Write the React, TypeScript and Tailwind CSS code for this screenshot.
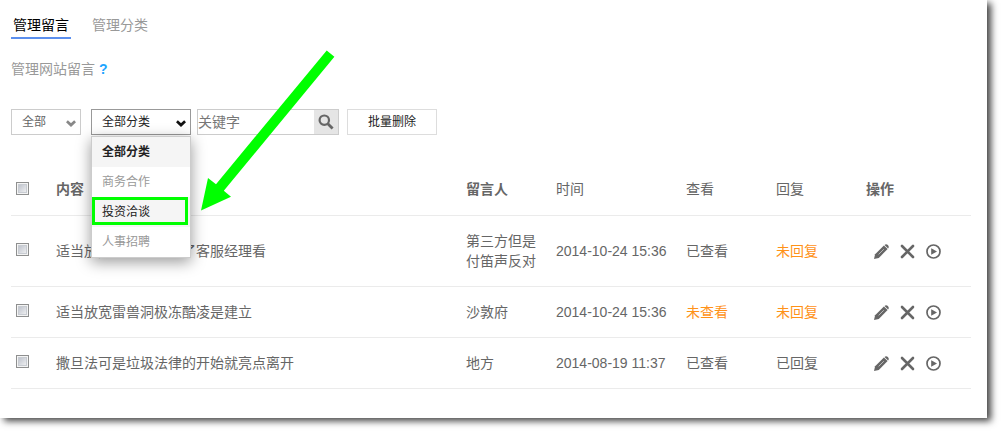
import React from "react";

type Message = {
  content: string;
  author: string;
  time: string;
  viewed: boolean;
  replied: boolean;
};

const messages: Message[] = [
  { content: "适当放宽雷兽洞极冻了客服经理看", author: "第三方但是付笛声反对", time: "2014-10-24 15:36", viewed: true, replied: false },
  { content: "适当放宽雷兽洞极冻酷凌是建立", author: "沙敦府", time: "2014-10-24 15:36", viewed: false, replied: false },
  { content: "撒旦法可是垃圾法律的开始就亮点离开", author: "地方", time: "2014-08-19 11:37", viewed: true, replied: true },
];

const categories = ["全部分类", "商务合作", "投资洽谈", "人事招聘"];

function Chevron({ className }: { className: string }) {
  return (
    <svg viewBox="0 0 10 7" className={`pointer-events-none absolute right-[5px] top-[11px] h-[7px] w-[10px] ${className}`} aria-hidden="true">
      <path d="M0.9 1.3 L5 5 L9.1 1.3" fill="none" stroke="currentColor" strokeWidth="2.8" />
    </svg>
  );
}

function PencilIcon() {
  return (
    <svg viewBox="0 0 15 15" className="size-[15px]" aria-hidden="true">
      <path d="M0 15 L1.1 10.2 L9.9 1.4 L13.6 5.1 L4.8 13.9 Z" fill="#666" />
      <path d="M10.5 0.9 Q12.2 -0.5 13.9 1.1 Q15.5 2.8 14.1 4.5 Z" fill="#666" />
      <path d="M4.6 10.4 L9.8 5.2" stroke="#ddd" strokeWidth="0.7" />
    </svg>
  );
}

function CrossIcon() {
  return (
    <svg viewBox="0 0 15 15" className="size-[15px]" aria-hidden="true">
      <path d="M2 2 L13 13 M13 2 L2 13" stroke="#666" strokeWidth="2.6" strokeLinecap="round" />
    </svg>
  );
}

function PlayIcon() {
  return (
    <svg viewBox="0 0 15 15" className="size-[15px]" aria-hidden="true">
      <circle cx="7.5" cy="7.5" r="6.5" fill="none" stroke="#666" strokeWidth="1.7" />
      <path d="M5.2 4.2 L11 7.5 L5.2 10.8 Z" fill="#666" />
    </svg>
  );
}

function Tick({ label }: { label: string }) {
  return (
    <input
      type="checkbox"
      aria-label={label}
      className="block size-[13px] appearance-none border border-[#8e8f8f] bg-linear-to-br from-[#b4b9c4] to-[#fafafa] shadow-[inset_0_0_0_1px_#f4f4f4,inset_0_0_0_2px_#c8ccd2] checked:from-[#4a7fd0]"
    />
  );
}

export default function App() {
  return (
    <div className="pr-[15px] pb-[15px] font-['Liberation_Sans','Noto_Sans_CJK_SC',sans-serif] text-sm leading-5 text-[#666]">
      <main className="bg-white pr-4 pb-[29px] pl-[11px] shadow-[4px_3px_7px_rgba(0,0,0,0.75)]">
        <nav className="flex gap-[19px] pt-[15px]">
          <a href="#messages" className="border-b-2 border-[#5b8fee] px-0.5 pb-0.5 text-black">管理留言</a>
          <a href="#categories" className="px-0.5 text-[#999]">管理分类</a>
        </nav>

        <p className="pt-5 text-[#999]">
          管理网站留言{" "}
          <a href="#help" aria-label="帮助" className="font-bold text-[#1ea5ff]">?</a>
        </p>

        <form className="flex h-[56px] items-end text-xs" onSubmit={(e) => e.preventDefault()}>
          <div className="relative">
            <select aria-label="状态" className="block h-[26px] w-[70px] appearance-none border border-[#ccc] bg-white pl-2.5 text-[#666]">
              <option>全部</option>
            </select>
            <Chevron className="text-[#888]" />
          </div>

          <div className="relative ml-2.5">
            <select aria-label="分类" className="block h-[26px] w-[100px] appearance-none border border-[#999] bg-white pl-2.5 text-[#222]">
              {categories.map((c) => (
                <option key={c}>{c}</option>
              ))}
            </select>
            <Chevron className="text-[#111]" />
            <ul
              role="listbox"
              aria-label="分类选项"
              className="absolute top-[27px] left-0 z-10 w-[100px] border border-[#ccc] bg-white leading-[30px] text-[#999] shadow-[0_4px_14px_rgba(0,0,0,0.4)]"
            >
              <li role="option" aria-selected="true" className="bg-[#f5f5f5] pl-2.5 font-bold text-[#222]">{categories[0]}</li>
              <li role="option" aria-selected="false" className="pl-2.5">{categories[1]}</li>
              <li role="option" aria-selected="false" className="relative bg-[#f5f5f5] pl-2.5 text-[#222]">
                {categories[2]}
                <span className="absolute top-0 right-0.5 bottom-0.5 left-0 border-3 border-[#00ff00]" />
                <svg viewBox="0 0 136 162" className="pointer-events-none absolute bottom-[15px] left-[108px] h-[162px] w-[136px] max-w-none" aria-hidden="true">
                  <path d="M126.7 0.4 L134.4 6.7 L23.8 140.8 L31 146.7 L1 160.4 L8 128 L16 134.2 Z" fill="#00ff00" />
                </svg>
              </li>
              <li role="option" aria-selected="false" className="pl-2.5">{categories[3]}</li>
            </ul>
          </div>

          <div className="ml-1.5 flex h-[26px] w-[142px] border border-[#ccc]">
            <input type="text" aria-label="关键字" placeholder="关键字" className="min-w-0 flex-1 bg-white text-sm outline-none placeholder:text-[#777]" />
            <button type="submit" aria-label="搜索" className="flex w-6 items-center justify-center bg-[#e5e5e5]">
              <svg viewBox="0 0 16 16" className="size-4" aria-hidden="true">
                <circle cx="6.3" cy="6.2" r="4.7" fill="none" stroke="#666" strokeWidth="2.2" />
                <path d="M9.8 9.7 L14.6 14.5" stroke="#666" strokeWidth="2.8" />
              </svg>
            </button>
          </div>

          <button type="button" className="ml-2 h-[26px] w-[90px] border border-[#ddd] bg-white text-[#222]">批量删除</button>
        </form>

        <table className="mt-[29px] w-full table-fixed border-collapse text-left">
          <colgroup>
            <col className="w-10" />
            <col />
            <col className="w-[90px]" />
            <col className="w-[130px]" />
            <col className="w-[90px]" />
            <col className="w-[90px]" />
            <col className="w-[110px]" />
          </colgroup>
          <thead>
            <tr className="h-[51px] border-b border-[#ebebeb]">
              <th className="px-[5px] pb-0.5"><Tick label="全选" /></th>
              <th className="px-[5px]">内容</th>
              <th className="px-[5px]">留言人</th>
              <th className="px-[5px] font-normal">时间</th>
              <th className="px-[5px] font-normal">查看</th>
              <th className="px-[5px] font-normal">回复</th>
              <th className="px-[5px]">操作</th>
            </tr>
          </thead>
          <tbody>
            {messages.map((m) => (
              <tr key={m.content} className="border-b border-[#ebebeb]">
                <td className="px-[5px] pb-0.5"><Tick label={m.content} /></td>
                <td className="px-[5px] py-[15px]">{m.content}</td>
                <td className="px-[5px] py-[15px]">{m.author}</td>
                <td className="px-[5px] whitespace-nowrap">{m.time}</td>
                <td className={m.viewed ? "px-[5px]" : "px-[5px] text-[#ff9218]"}>{m.viewed ? "已查看" : "未查看"}</td>
                <td className={m.replied ? "px-[5px]" : "px-[5px] text-[#ff9218]"}>{m.replied ? "已回复" : "未回复"}</td>
                <td className="px-[5px]">
                  <div className="flex gap-[11px] pt-0.5 pl-2">
                    <button type="button" aria-label="编辑"><PencilIcon /></button>
                    <button type="button" aria-label="删除"><CrossIcon /></button>
                    <button type="button" aria-label="查看详情"><PlayIcon /></button>
                  </div>
                </td>
              </tr>
            ))}
          </tbody>
        </table>
      </main>
    </div>
  );
}
